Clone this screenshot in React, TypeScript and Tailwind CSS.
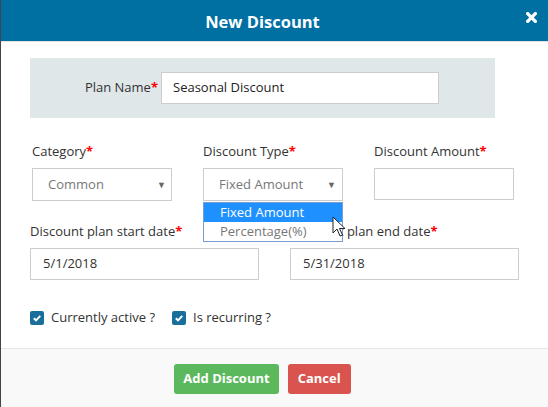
import React from "react";

const Req = () => <span className="text-[#ff0000] font-bold">*</span>;

function Check({ label }: { label: string }) {
  return (
    <label className="flex items-center gap-[7px]">
      <span className="w-[14px] h-[14px] rounded-[2px] bg-[#1a6e9c] flex items-center justify-center">
        <svg width="10" height="10" viewBox="0 0 10 10">
          <path d="M1.8 5.2 L4 7.3 L8.3 2.8" stroke="white" strokeWidth="1.9" fill="none" />
        </svg>
      </span>
      <span className="text-[13px] text-[#333]">{label}</span>
    </label>
  );
}

export default function App() {
  return (
    <div
      className="w-[548px] h-[407px] bg-white flex flex-col border-l border-[#444] overflow-hidden"
      style={{ fontFamily: '"Open Sans", "Liberation Sans", sans-serif' }}
    >
      <div className="h-[42px] bg-[#0070a3] relative flex items-center justify-center pr-[24px] pt-[3px] border-b border-[#e0e0e0] shrink-0">
        <span className="text-white font-bold text-[16.5px]">New Discount</span>
        <svg className="absolute right-[11px] top-[12px]" width="11" height="11" viewBox="0 0 10 10">
          <path d="M1.5 1.5 L8.5 8.5 M8.5 1.5 L1.5 8.5" stroke="white" strokeWidth="3" strokeLinecap="square" />
        </svg>
      </div>

      <div className="flex-1 flex flex-col">
        <div className="mt-[16px] ml-[29px] w-[465px] h-[60px] bg-[#dfe7e9] flex items-center">
          <span className="w-[128px] text-right text-[13px] text-[#333]">
            Plan Name<Req />
          </span>
          <div className="ml-[3px] w-[278px] h-[32px] bg-white border border-[#ccc] flex items-center px-[11px] text-[13px] text-[#222]">
            Seasonal Discount
          </div>
        </div>

        <div className="mt-[24px] ml-[31px] w-[482px] grid grid-cols-3 gap-x-[31px]">
          <div className="flex flex-col">
            <span className="text-[13px] text-[#333] h-[20px]">Category<Req /></span>
            <div className="mt-[6px] h-[33px] border border-[#ccc] flex items-center justify-between pl-[15px] pr-[5px] text-[13px] text-[#777]">
              <span>Common</span>
              <span className="text-[9px] text-[#666]">▼</span>
            </div>
          </div>
          <div className="flex flex-col relative">
            <span className="text-[13px] text-[#333] h-[20px]">Discount Type<Req /></span>
            <div className="mt-[6px] h-[33px] border border-[#ccc] flex items-center justify-between pl-[15px] pr-[6px] text-[13px] text-[#777]">
              <span>Fixed Amount</span>
              <span className="text-[9px] text-[#666]">▼</span>
            </div>
            <div className="absolute left-0 top-[60px] w-[140px] bg-white border border-[#7a9cd3] z-10 text-[13px] leading-[19px]">
              <div className="bg-[#1e90ff] text-white pl-[16px]">Fixed Amount</div>
              <div className="text-[#777] pl-[16px]">Percentage(%)</div>
            </div>
            <svg className="absolute left-[129px] top-[74px] z-20" width="14" height="22" viewBox="0 0 14 22">
              <path d="M1 1 L1 17 L5 13 L8 20 L10.5 19 L7.5 12.5 L13 12.5 Z" fill="white" stroke="#222" strokeWidth="1" strokeLinejoin="round" />
            </svg>
          </div>
          <div className="flex flex-col">
            <span className="text-[13px] text-[#333] h-[20px]">Discount Amount<Req /></span>
            <div className="mt-[6px] h-[32px] border border-[#ccc]" />
          </div>
        </div>

        <div className="mt-[21px] ml-[29px] w-[489px] grid grid-cols-2 gap-x-[31px]">
          <div className="flex flex-col">
            <span className="text-[13px] text-[#333] h-[20px]">Discount plan start date<Req /></span>
            <div className="mt-[6px] h-[32px] border border-[#ccc] flex items-center px-[12px] text-[13px] text-[#333]">5/1/2018</div>
          </div>
          <div className="flex flex-col">
            <span className="text-[13px] text-[#333] h-[20px]">Discount plan end date<Req /></span>
            <div className="mt-[6px] h-[32px] border border-[#ccc] flex items-center px-[12px] text-[13px] text-[#333]">5/31/2018</div>
          </div>
        </div>

        <div className="mt-[28px] ml-[29px] flex items-center gap-[17px]">
          <Check label="Currently active ?" />
          <Check label="Is recurring ?" />
        </div>
      </div>

      <div className="h-[59px] shrink-0 border-t border-[#e5e5e5] bg-[#f9f9f9] flex items-start justify-center gap-[9px] pt-[15px] pr-[24px]">
        <button className="h-[30px] px-[9px] rounded-[3px] bg-[#5cb85c] text-white font-bold text-[13px]">Add Discount</button>
        <button className="h-[30px] px-[10px] rounded-[3px] bg-[#d9534f] text-white font-bold text-[13px]">Cancel</button>
      </div>
    </div>
  );
}
